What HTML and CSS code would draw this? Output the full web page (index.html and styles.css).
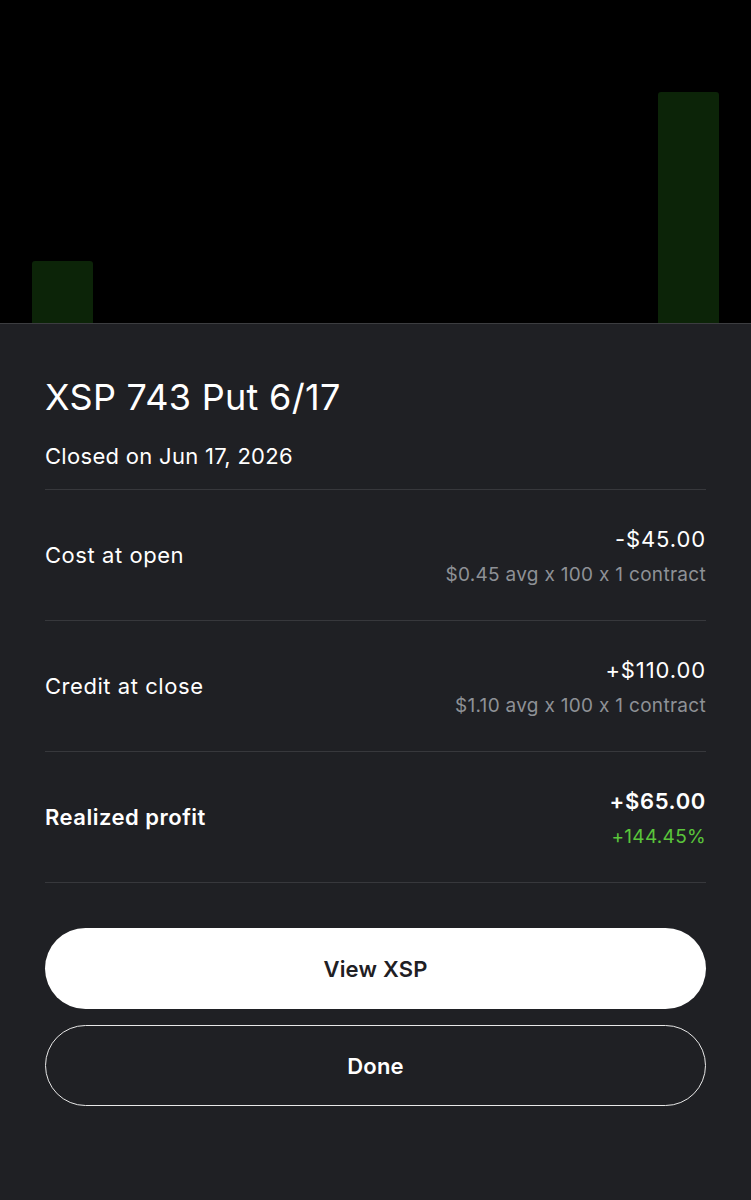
FILE: index.html
```html
<!DOCTYPE html>
<html lang="en">
<head>
  <meta charset="UTF-8">
  <title>Closed Position</title>
  <link rel="stylesheet" href="styles.css">
</head>
<body>

  <!-- Chart background -->
  <div class="chart">
    <div class="bar bar-left"></div>
    <div class="bar bar-right"></div>
  </div>

  <!-- Sheet -->
  <section class="sheet">
    <h1 class="title">XSP 743 Put 6/17</h1>
    <p class="subtitle">Closed on Jun 17, 2026</p>

    <div class="rows">
      <div class="row">
        <div class="label">Cost at open</div>
        <div class="values">
          <div class="amount">-$45.00</div>
          <div class="detail">$0.45 avg x 100 x 1 contract</div>
        </div>
      </div>
      <div class="row">
        <div class="label">Credit at close</div>
        <div class="values">
          <div class="amount">+$110.00</div>
          <div class="detail">$1.10 avg x 100 x 1 contract</div>
        </div>
      </div>
      <div class="row row-total">
        <div class="label">Realized profit</div>
        <div class="values">
          <div class="amount">+$65.00</div>
          <div class="detail gain">+144.45%</div>
        </div>
      </div>
    </div>

    <div class="actions">
      <button class="btn btn-primary">View XSP</button>
      <button class="btn btn-outline">Done</button>
    </div>
  </section>

</body>
</html>
```

FILE: styles.css
```css
:root {
  --sheet-bg: #1f2024;
  --line: #37383c;
  --text: #ffffff;
  --muted: #8e9196;
  --gain: #5ac53b;
  --bar: #0c2408;
}

body {
  margin: 0;
  padding: 0;
  background-color: #000;
  color: var(--text);
  font-family: Inter, "Noto Sans", sans-serif;
  height: 1200px;
  display: flex;
  flex-direction: column;
}

.chart {
  height: 323px;
  display: flex;
  justify-content: space-between;
  align-items: flex-end;
  padding: 0 32px;
  background: #000;
}

.bar {
  width: 61px;
  background-color: var(--bar);
  border-radius: 3px 3px 0 0;
}

.bar-left {
  height: 62px;
}

.bar-right {
  height: 231px;
}

.sheet {
  flex: 1;
  background-color: var(--sheet-bg);
  border-top: 1px solid #3c3d40;
  padding: 0 45px;
}

.title {
  margin: 47px 0 0;
  font-size: 36px;
  font-weight: 400;
  line-height: 52px;
  letter-spacing: 0.3px;
}

.subtitle {
  margin: 18px 0 0;
  font-size: 22px;
  line-height: 30px;
  letter-spacing: 0.3px;
}

.rows {
  margin-top: 18px;
  border-top: 1px solid var(--line);
}

.row {
  height: 130px;
  display: flex;
  justify-content: space-between;
  align-items: center;
  border-bottom: 1px solid var(--line);
}

.label {
  font-size: 22px;
  letter-spacing: 0.55px;
}

.values {
  text-align: right;
}

.amount {
  font-size: 22px;
  line-height: 30px;
  letter-spacing: 0.9px;
}

.detail {
  margin-top: 9px;
  font-size: 19px;
  line-height: 24px;
  color: var(--muted);
  letter-spacing: 0.3px;
}

.detail.gain {
  color: var(--gain);
}

.row-total .label {
  font-weight: 600;
  letter-spacing: 0.5px;
}

.row-total .amount {
  font-weight: 600;
  letter-spacing: 0.65px;
}

.actions {
  margin-top: 45px;
  display: flex;
  flex-direction: column;
  gap: 16px;
}

.btn {
  height: 81px;
  border-radius: 41px;
  font-family: inherit;
  font-size: 22px;
  font-weight: 600;
  letter-spacing: 0.2px;
  cursor: pointer;
}

.btn-primary {
  background-color: #fff;
  color: #1f2024;
  border: none;
}

.btn-outline {
  background-color: transparent;
  color: #fff;
  border: 1.5px solid #e8e8e8;
}
```
